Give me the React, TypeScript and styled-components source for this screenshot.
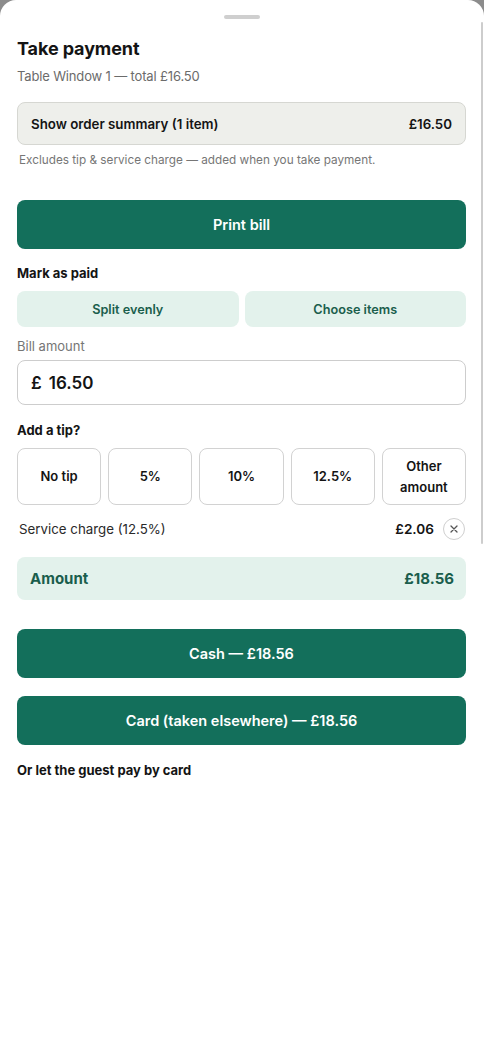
import React from 'react';
import styled, { createGlobalStyle } from 'styled-components';

const GlobalStyle = createGlobalStyle`
  html, body {
    margin: 0;
    padding: 0;
    background: #8c8c8c;
  }
  body {
    font-family: Inter, "Noto Sans", "Liberation Sans", sans-serif;
    color: #141414;
    -webkit-font-smoothing: antialiased;
  }
  * { box-sizing: border-box; }
`;

const Sheet = styled.div`
  position: relative;
  min-height: 1049px;
  background: #fff;
  border-radius: 16px 16px 0 0;
  padding: 15px 18px 0 17px;
  display: flex;
  flex-direction: column;
`;

const ScrollThumb = styled.div`
  position: absolute;
  right: 1px;
  top: 22px;
  width: 2px;
  height: 522px;
  background: #cdcdcd;
  border-radius: 1px;
`;

const Handle = styled.div`
  align-self: center;
  width: 36px;
  height: 4px;
  border-radius: 2px;
  background: #cfcfcf;
  margin-left: 1px;
`;

const Title = styled.h1`
  margin: 18px 0 0;
  font-size: 18px;
  line-height: 24px;
  font-weight: 700;
  letter-spacing: -0.1px;
`;

const Subtitle = styled.div`
  margin-top: 6px;
  font-size: 13px;
  line-height: 18px;
  letter-spacing: -0.15px;
  color: #6b6b6b;
`;

const SummaryBox = styled.div`
  margin-top: 17px;
  height: 43px;
  border: 1px solid #d6d7d2;
  background: #eeefeb;
  border-radius: 8px;
  padding: 0 13px;
  display: flex;
  align-items: center;
  justify-content: space-between;
  font-size: 13.3px;
  font-weight: 600;
`;

const Note = styled.div`
  margin-top: 7px;
  padding-left: 2px;
  font-size: 11.75px;
  line-height: 16px;
  color: #767676;
`;

const PrimaryButton = styled.button<{ $gap: number }>`
  margin-top: ${p => p.$gap}px;
  height: 49px;
  width: 100%;
  border: none;
  border-radius: 8px;
  background: #136f5b;
  color: #fff;
  font-family: inherit;
  font-size: 14.5px;
  font-weight: 600;
`;

const SectionLabel = styled.div<{ $gap: number }>`
  margin-top: ${p => p.$gap}px;
  font-size: 13px;
  line-height: 18px;
  font-weight: 700;
`;

const SplitRow = styled.div`
  margin-top: 9px;
  display: grid;
  grid-template-columns: 1fr 1fr;
  gap: 6px;
`;

const SoftButton = styled.button`
  height: 36px;
  border: none;
  border-radius: 8px;
  background: #e3f2ec;
  color: #1a5e4c;
  font-family: inherit;
  font-size: 12.7px;
  font-weight: 600;
`;

const FieldLabel = styled.div`
  margin-top: 10px;
  font-size: 13px;
  line-height: 18px;
  color: #767676;
`;

const AmountInput = styled.div`
  margin-top: 5px;
  height: 45px;
  border: 1px solid #cdcdcd;
  border-radius: 8px;
  padding: 0 13px;
  display: flex;
  align-items: center;
  gap: 7px;
  font-size: 17px;
  font-weight: 600;
`;

const TipRow = styled.div`
  margin-top: 9px;
  display: grid;
  grid-template-columns: repeat(5, 1fr);
  gap: 7px;
`;

const TipButton = styled.button`
  height: 57px;
  border: 1px solid #d2d2d2;
  border-radius: 8px;
  background: #fff;
  color: #141414;
  font-family: inherit;
  font-size: 13px;
  line-height: 21px;
  font-weight: 600;
  padding: 0 4px;
`;

const ServiceRow = styled.div`
  margin-top: 13px;
  height: 22px;
  padding-left: 2px;
  display: flex;
  align-items: center;
  font-size: 13.3px;
  color: #2a2a2a;
`;

const ServiceLabel = styled.span`
  flex: 1;
`;

const ServiceValue = styled.span`
  font-weight: 600;
  font-size: 13.6px;
  color: #141414;
  margin-right: 9px;
`;

const RemoveButton = styled.span`
  width: 22px;
  height: 22px;
  border: 1px solid #cfcfcf;
  border-radius: 50%;
  display: flex;
  align-items: center;
  justify-content: center;
  margin-right: 1px;
  color: #555;
`;

const TotalBox = styled.div`
  margin-top: 17px;
  height: 43px;
  border-radius: 8px;
  background: #e3f2ec;
  color: #1a5e4c;
  padding: 0 12px 0 13px;
  display: flex;
  align-items: center;
  justify-content: space-between;
  font-size: 15px;
  font-weight: 700;
`;

const tips = ['No tip', '5%', '10%', '12.5%'];

export default function App() {
  return (
    <>
      <GlobalStyle />
      <Sheet>
        <ScrollThumb />
        <Handle />
        <Title>Take payment</Title>
        <Subtitle>Table Window 1 — total £16.50</Subtitle>
        <SummaryBox>
          <span>Show order summary (1 item)</span>
          <span>£16.50</span>
        </SummaryBox>
        <Note>Excludes tip &amp; service charge — added when you take payment.</Note>
        <PrimaryButton $gap={32}>Print bill</PrimaryButton>
        <SectionLabel $gap={15}>Mark as paid</SectionLabel>
        <SplitRow>
          <SoftButton>Split evenly</SoftButton>
          <SoftButton>Choose items</SoftButton>
        </SplitRow>
        <FieldLabel>Bill amount</FieldLabel>
        <AmountInput>
          <span>£</span>
          <span>16.50</span>
        </AmountInput>
        <SectionLabel $gap={16}>Add a tip?</SectionLabel>
        <TipRow>
          {tips.map(t => (
            <TipButton key={t}>{t}</TipButton>
          ))}
          <TipButton>
            Other
            <br />
            amount
          </TipButton>
        </TipRow>
        <ServiceRow>
          <ServiceLabel>Service charge (12.5%)</ServiceLabel>
          <ServiceValue>£2.06</ServiceValue>
          <RemoveButton>
            <svg width="8" height="8" viewBox="0 0 8 8" fill="none" stroke="currentColor" strokeWidth="1.3" strokeLinecap="round">
              <path d="M1 1l6 6M7 1L1 7" />
            </svg>
          </RemoveButton>
        </ServiceRow>
        <TotalBox>
          <span>Amount</span>
          <span>£18.56</span>
        </TotalBox>
        <PrimaryButton $gap={29}>Cash — £18.56</PrimaryButton>
        <PrimaryButton $gap={18}>Card (taken elsewhere) — £18.56</PrimaryButton>
        <SectionLabel $gap={16}>Or let the guest pay by card</SectionLabel>
      </Sheet>
    </>
  );
}
